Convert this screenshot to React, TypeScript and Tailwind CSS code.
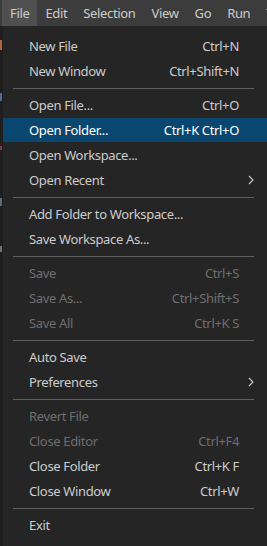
type Item = {
  label: string;
  shortcut?: string;
  disabled?: boolean;
  submenu?: boolean;
  active?: boolean;
};

const groups: Item[][] = [
  [
    { label: "New File", shortcut: "Ctrl+N" },
    { label: "New Window", shortcut: "Ctrl+Shift+N" },
  ],
  [
    { label: "Open File...", shortcut: "Ctrl+O" },
    { label: "Open Folder...", shortcut: "Ctrl+K Ctrl+O", active: true },
    { label: "Open Workspace..." },
    { label: "Open Recent", submenu: true },
  ],
  [
    { label: "Add Folder to Workspace..." },
    { label: "Save Workspace As..." },
  ],
  [
    { label: "Save", shortcut: "Ctrl+S", disabled: true },
    { label: "Save As...", shortcut: "Ctrl+Shift+S", disabled: true },
    { label: "Save All", shortcut: "Ctrl+K S", disabled: true },
  ],
  [
    { label: "Auto Save" },
    { label: "Preferences", submenu: true },
  ],
  [
    { label: "Revert File", disabled: true },
    { label: "Close Editor", shortcut: "Ctrl+F4", disabled: true },
    { label: "Close Folder", shortcut: "Ctrl+K F" },
    { label: "Close Window", shortcut: "Ctrl+W" },
  ],
  [{ label: "Exit" }],
];

const menus = ["File", "Edit", "Selection", "View", "Go", "Run", "Terminal"];

function Chevron() {
  return (
    <svg width="6" height="10" viewBox="0 0 6 10" fill="none">
      <path d="M1 1l4 4-4 4" stroke="currentColor" strokeWidth="1.1" />
    </svg>
  );
}

function MenuRow({ item }: { item: Item }) {
  const color = item.active
    ? "text-white"
    : item.disabled
      ? "text-[#6e6e6e]"
      : "text-[#cccccc]";
  return (
    <div className="h-[25px]">
      <div
        className={`flex h-[24px] items-center ${color} ${item.active ? "bg-[#094771]" : ""}`}
      >
        <span className="flex-1 pl-[26px] whitespace-nowrap">{item.label}</span>
        {item.shortcut && <span className="whitespace-nowrap">{item.shortcut}</span>}
        <span className="flex w-[28px] shrink-0 items-center pl-[9px]">
          {item.submenu && <Chevron />}
        </span>
      </div>
    </div>
  );
}

export default function App() {
  return (
    <div className="flex h-[546px] w-[267px] flex-col overflow-hidden bg-[#252526] font-['Segoe_UI','Noto_Sans',sans-serif] text-[13px] leading-none tracking-[-0.35px]">
      <div className="flex h-[26px] shrink-0 items-stretch overflow-hidden bg-[#3c3c3c] pl-[2px] text-[#cccccc]">
        {menus.map((m) => (
          <div
            key={m}
            className={`flex items-center px-2 whitespace-nowrap ${m === "File" ? "bg-[#505050]" : ""}`}
          >
            {m}
          </div>
        ))}
      </div>

      <div className="flex flex-1">
        <div className="flex w-[3px] shrink-0 flex-col bg-[#1e1e1e]">
          <div className="mt-[14px] h-[10px] w-[2px] bg-[#b8613f]" />
          <div className="mt-[43px] h-[8px] w-[2px] bg-[#4a6d94]" />
          <div className="mt-[45px] h-[4px] w-[2px] bg-[#8a3a3a]" />
          <div className="mt-[48px] h-[8px] w-[2px] bg-[#5b6a7a]" />
          <div className="mt-[40px] h-[6px] w-[2px] bg-[#6a7280]" />
        </div>
        <div className="flex flex-1 flex-col pt-[8px]">
          {groups.map((group, gi) => (
            <div key={gi}>
              {gi > 0 && (
                <div className="flex h-[9px] items-center">
                  <div className="ml-[10px] mr-[13px] h-px flex-1 bg-[#5f5f5f]" />
                </div>
              )}
              {group.map((item) => (
                <MenuRow key={item.label} item={item} />
              ))}
            </div>
          ))}
        </div>
      </div>
    </div>
  );
}
